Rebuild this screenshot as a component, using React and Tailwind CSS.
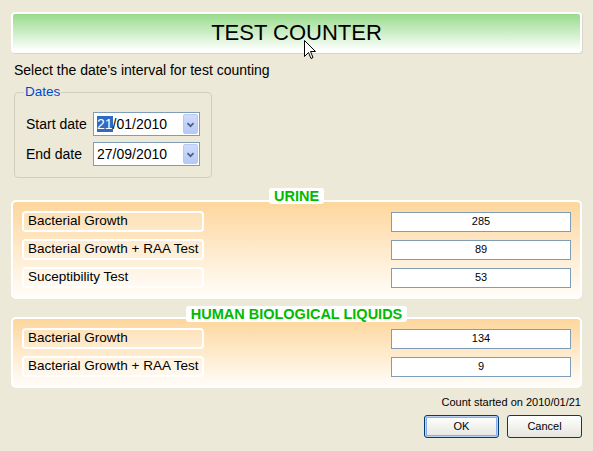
import React from 'react';

const urine = [
  { label: 'Bacterial Growth', value: 285 },
  { label: 'Bacterial Growth + RAA Test', value: 89 },
  { label: 'Suceptibility Test', value: 53 },
];

const liquids = [
  { label: 'Bacterial Growth', value: 134 },
  { label: 'Bacterial Growth + RAA Test', value: 9 },
];

const Chevron = () => (
  <svg width="15" height="21" viewBox="0 0 15 21">
    <path d="M4 9 L7.5 12.5 L11 9" fill="none" stroke="#4d6185" strokeWidth="2" />
  </svg>
);

const DateCombo = ({ day, rest }) => (
  <div className="w-[107px] h-[24px] border border-[#7f9db9] bg-white flex items-center pl-[3px] pr-[1px]">
    <div className="flex-1 text-[14px] leading-[16px] text-black">
      {day.selected ? (
        <span className="bg-[#316ac5] text-white">{day.text}</span>
      ) : (
        <span>{day.text}</span>
      )}
      {rest}
    </div>
    <div className="w-[15px] h-[20px] rounded-[2px] border border-[#b9c9f3] bg-gradient-to-b from-[#d0dcfc] to-[#b6c9f7] flex items-center justify-center">
      <Chevron />
    </div>
  </div>
);

const Section = ({ title, rows, offset }) => (
  <div className="flex flex-col items-center">
    <div className="relative z-10 h-[16px] px-[5px] bg-white rounded-[3px] flex items-center text-[14.5px] font-bold text-[#00bb00] leading-none">
      {title}
    </div>
    <div className={`self-stretch border-2 border-white rounded-[5px] bg-gradient-to-b from-[#fdd69c] to-[#fffdf9] pt-[9px] pb-[9px] px-[9px] flex flex-col gap-[7px] ${offset}`}>
      {rows.map((r) => (
        <div key={r.label} className="flex items-center justify-between h-[21px]">
          <div className="w-[182px] h-[21px] border-2 border-white rounded-[4px] bg-white/20 pl-[4px] flex items-center text-[13.5px] text-black">
            {r.label}
          </div>
          <div className="w-[180px] h-[20px] border border-[#7f9db9] bg-white flex items-center justify-center text-[11px] text-black">
            {r.value}
          </div>
        </div>
      ))}
    </div>
  </div>
);

export default function App() {
  return (
    <div className="relative w-[593px] h-[451px] bg-[#ece9d8] px-[11px] pt-[12px] font-['Liberation_Sans',Arial,sans-serif] overflow-hidden">
      <div className="h-[41px] border-2 border-white rounded-[4px] bg-gradient-to-b from-[#97db8b] to-[#ffffff] flex items-center justify-center text-[22px] text-black shadow-[1px_1px_0_#d8d6c8]">
        TEST COUNTER
      </div>

      <div className="mt-[10px] ml-[3px] text-[14px] leading-[15px] text-black">
        Select the date's interval for test counting
      </div>

      <div className="mt-[14px] ml-[3px] w-[198px] h-[86px] border border-[#d0d0bf] rounded-[4px] flex flex-col">
        <div className="-mt-[9px] ml-[9px] px-[1px] w-fit bg-[#ece9d8] text-[13.5px] leading-[15px] text-[#0046d5]">
          Dates
        </div>
        <div className="mt-[13px] flex flex-col gap-[6px]">
          <div className="flex items-center pl-[11px]">
            <span className="w-[67px] text-[14px] text-black">Start date</span>
            <DateCombo day={{ text: '21', selected: true }} rest="/01/2010" />
          </div>
          <div className="flex items-center pl-[11px]">
            <span className="w-[67px] text-[14px] text-black">End date</span>
            <DateCombo day={{ text: '27', selected: false }} rest="/09/2010" />
          </div>
        </div>
      </div>

      <div className="mt-[10px]">
        <Section title="URINE" rows={urine} offset="-mt-[4px]" />
      </div>
      <div className="mt-[7px]">
        <Section title="HUMAN BIOLOGICAL LIQUIDS" rows={liquids} offset="-mt-[5px]" />
      </div>

      <div className="mt-[7px] text-right pr-[1px] text-[11px] leading-[14px] text-black">
        Count started on 2010/01/21
      </div>

      <div className="mt-[6px] flex justify-end gap-[8px]">
        <button className="w-[75px] h-[23px] border border-[#003c74] rounded-[3px] bg-gradient-to-b from-[#ffffff] to-[#e6e5de] text-[11px] text-black shadow-[inset_0_0_0_1px_#b9d1f5,inset_0_0_0_2px_#89adec]">
          OK
        </button>
        <button className="w-[75px] h-[23px] border border-[#003c74] rounded-[3px] bg-gradient-to-b from-[#ffffff] to-[#e6e5de] text-[11px] text-black">
          Cancel
        </button>
      </div>

      <svg className="absolute left-[304px] top-[40px]" width="12" height="20" viewBox="0 0 12 20">
        <path d="M0.5 0.5 L0.5 16.5 L4.5 12.5 L7 18.5 L9 17.5 L6.5 11.5 L11.5 11.5 Z" fill="white" stroke="black" strokeWidth="1" />
      </svg>
    </div>
  );
}
